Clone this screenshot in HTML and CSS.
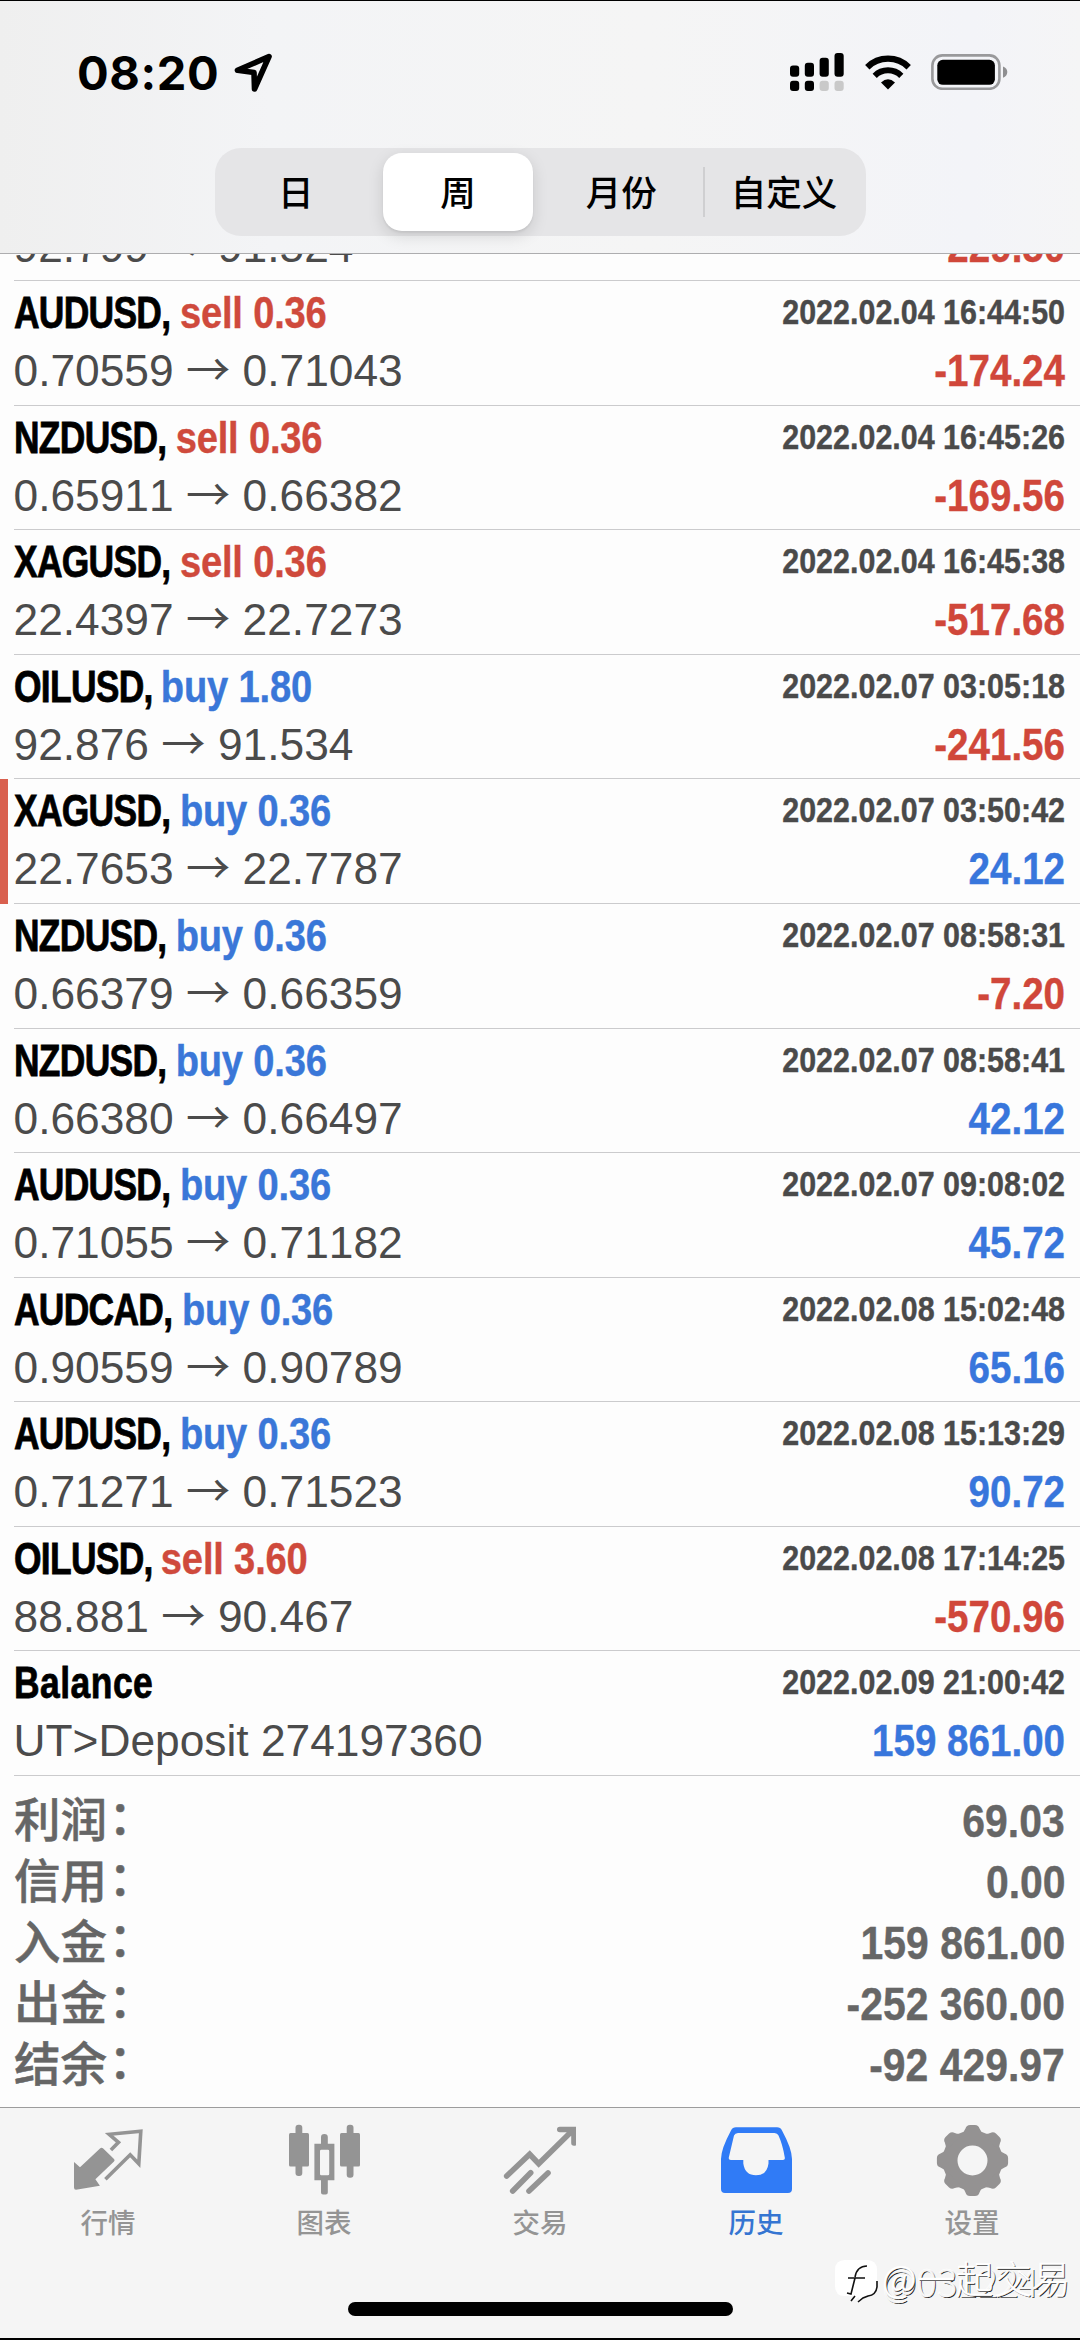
FILE: index.html
```html
<!DOCTYPE html>
<html lang="zh-CN">
<head>
<meta charset="utf-8">
<title>历史</title>
<link rel="stylesheet" href="styles.css">
</head>
<body>
<div class="phone">
  <header class="topbar">
    <div class="status">
      <div class="status-left">
        <span class="clock">08:20</span>
        <svg class="location" viewBox="0 0 40 40"><path d="M36 4.5 4.5 18.3 21 20.5 21.5 37Z" fill="none" stroke="#000" stroke-width="5.6" stroke-linejoin="round"/></svg>
      </div>
      <div class="status-right">
        <svg class="signal" viewBox="0 0 54 38">
          <g fill="#000"><rect x="0" y="12.4" width="9.2" height="11.3" rx="3"/><rect x="14.8" y="9.7" width="9.2" height="14" rx="3"/><rect x="29.6" y="4.7" width="9.2" height="19" rx="3"/><rect x="44.5" y="0" width="9.2" height="23.7" rx="3"/><rect x="0" y="27.7" width="9.2" height="10.3" rx="3"/><rect x="14.8" y="27.7" width="9.2" height="10.3" rx="3"/></g>
          <g fill="#c9c9c9"><rect x="29.6" y="27.7" width="9.2" height="10.3" rx="3"/><rect x="44.5" y="27.7" width="9.2" height="10.3" rx="3"/></g>
        </svg>
        <svg class="wifi" viewBox="0 0 46 35">
          <path d="M2.3 12.2A29.5 29.5 0 0 1 43.7 12.2" fill="none" stroke="#000" stroke-width="6.2"/>
          <path d="M9.7 20.8A19 19 0 0 1 36.3 20.8" fill="none" stroke="#000" stroke-width="6"/>
          <path d="M16 27.5Q23 21 30 27.5L23 34.6Z"/>
        </svg>
        <svg class="battery" viewBox="0 0 78 36">
          <rect x="1.4" y="1.4" width="67" height="33.4" rx="10" fill="none" stroke="#99999b" stroke-width="2.6"/>
          <rect x="6.3" y="5.8" width="57.6" height="25" rx="5.5"/>
          <path d="M72 12.5Q76.3 14 76.3 18T72 23.8Z" fill="#8f8f91"/>
        </svg>
      </div>
    </div>
    <nav class="segments">
      <span class="segment">日</span>
      <span class="segment selected">周</span>
      <span class="segment">月份</span>
      <span class="segment divided">自定义</span>
    </nav>
  </header>

  <main class="history">
    <div class="deal clipped"><div class="price">92.799 <i>→</i> 91.524</div><div class="amount loss">-229.50</div></div>
    <div class="deal"><div class="title"><span class="symbol">AUDUSD, </span><span class="sell">sell 0.36</span></div><div class="time">2022.02.04 16:44:50</div><div class="price">0.70559 <i>→</i> 0.71043</div><div class="amount loss">-174.24</div></div>
    <div class="deal"><div class="title"><span class="symbol">NZDUSD, </span><span class="sell">sell 0.36</span></div><div class="time">2022.02.04 16:45:26</div><div class="price">0.65911 <i>→</i> 0.66382</div><div class="amount loss">-169.56</div></div>
    <div class="deal"><div class="title"><span class="symbol">XAGUSD, </span><span class="sell">sell 0.36</span></div><div class="time">2022.02.04 16:45:38</div><div class="price">22.4397 <i>→</i> 22.7273</div><div class="amount loss">-517.68</div></div>
    <div class="deal"><div class="title"><span class="symbol">OILUSD, </span><span class="buy">buy 1.80</span></div><div class="time">2022.02.07 03:05:18</div><div class="price">92.876 <i>→</i> 91.534</div><div class="amount loss">-241.56</div></div>
    <div class="deal marked"><div class="title"><span class="symbol">XAGUSD, </span><span class="buy">buy 0.36</span></div><div class="time">2022.02.07 03:50:42</div><div class="price">22.7653 <i>→</i> 22.7787</div><div class="amount gain">24.12</div></div>
    <div class="deal"><div class="title"><span class="symbol">NZDUSD, </span><span class="buy">buy 0.36</span></div><div class="time">2022.02.07 08:58:31</div><div class="price">0.66379 <i>→</i> 0.66359</div><div class="amount loss">-7.20</div></div>
    <div class="deal"><div class="title"><span class="symbol">NZDUSD, </span><span class="buy">buy 0.36</span></div><div class="time">2022.02.07 08:58:41</div><div class="price">0.66380 <i>→</i> 0.66497</div><div class="amount gain">42.12</div></div>
    <div class="deal"><div class="title"><span class="symbol">AUDUSD, </span><span class="buy">buy 0.36</span></div><div class="time">2022.02.07 09:08:02</div><div class="price">0.71055 <i>→</i> 0.71182</div><div class="amount gain">45.72</div></div>
    <div class="deal"><div class="title"><span class="symbol">AUDCAD, </span><span class="buy">buy 0.36</span></div><div class="time">2022.02.08 15:02:48</div><div class="price">0.90559 <i>→</i> 0.90789</div><div class="amount gain">65.16</div></div>
    <div class="deal"><div class="title"><span class="symbol">AUDUSD, </span><span class="buy">buy 0.36</span></div><div class="time">2022.02.08 15:13:29</div><div class="price">0.71271 <i>→</i> 0.71523</div><div class="amount gain">90.72</div></div>
    <div class="deal"><div class="title"><span class="symbol">OILUSD, </span><span class="sell">sell 3.60</span></div><div class="time">2022.02.08 17:14:25</div><div class="price">88.881 <i>→</i> 90.467</div><div class="amount loss">-570.96</div></div>
    <div class="deal"><div class="title"><span class="symbol balance">Balance</span></div><div class="time">2022.02.09 21:00:42</div><div class="price">UT&gt;Deposit 274197360</div><div class="amount gain">159 861.00</div></div>

    <section class="summary">
      <div class="total"><span>利润<i lang="zh-TW">：</i></span><span class="sum">69.03</span></div>
      <div class="total"><span>信用<i lang="zh-TW">：</i></span><span class="sum">0.00</span></div>
      <div class="total"><span>入金<i lang="zh-TW">：</i></span><span class="sum">159 861.00</span></div>
      <div class="total"><span>出金<i lang="zh-TW">：</i></span><span class="sum">-252 360.00</span></div>
      <div class="total"><span>结余<i lang="zh-TW">：</i></span><span class="sum">-92 429.97</span></div>
    </section>
  </main>

  <footer class="tabbar">
    <nav class="tabs">
      <div class="tab">
        <svg viewBox="0 0 80 80"><path d="M6 42 12 47.3 32 28.6Q33.6 27 35.2 28.6L46 39Q47.2 40.3 46 41.6L27.4 59.3 31.9 65.7 8 69.7Q6 69.7 6 67.5Z" fill="#949494"/><path d="M42.9 30 50.5 22.3 41.2 14.3 72.8 11.3 70.8 43.7 62.2 34.7 37.4 59.3" fill="none" stroke="#949494" stroke-width="3.6"/></svg>
        <span>行情</span>
      </div>
      <div class="tab">
        <svg viewBox="0 0 80 80" fill="#949494"><rect x="5" y="13" width="20" height="33.4" rx="1.5"/><rect x="11.5" y="4.7" width="6.8" height="51.3" rx="3"/><rect x="56" y="13" width="20" height="33.4" rx="1.5"/><rect x="62.7" y="4.7" width="6.8" height="53" rx="3"/><path fill-rule="evenodd" d="M30.4 23.7h20v36.6h-20zM36 31v23q0 1.3 1.3 1.3h6.6q1.3 0 1.3-1.3V31q0-1.3-1.3-1.3h-6.6Q36 29.7 36 31z"/><path d="M37 24v-7a3.4 3 0 0 1 6.8 0v7zM37 60v12.5q0 2 2 2h2.8q2 0 2-2V60z"/></svg>
        <span>图表</span>
      </div>
      <div class="tab">
        <svg viewBox="0 0 76 80" class="trade"><path d="M6.7 56 29.7 34.3 38.7 43.7 72 11M59.8 9.5H74V23M30.7 52.7 12.7 71M48 53 29 71" fill="none" stroke="#949494" stroke-width="5.6" stroke-linecap="round"/></svg>
        <span>交易</span>
      </div>
      <div class="tab active">
        <svg viewBox="0 0 80 80"><path fill="#307bf6" fill-rule="evenodd" d="M20 7.3H61Q64.5 7.3 66 10.5 76 29 76 39V69Q76 73 72 73H9Q5 73 5 69V39Q5 29 15 10.5 16.5 7.3 20 7.3ZM22 13Q19 13 18 15.5L12.8 37.5Q12.3 40 14.8 40H27.3V43.5Q29 55.3 40 55.3T52.5 43.5V40H67Q69.3 40 68.8 37.5 66.5 24 62.5 15.5 61.5 13 58.5 13Z"/></svg>
        <span>历史</span>
      </div>
      <div class="tab">
        <svg viewBox="0 0 80 80" fill="#949292"><path fill-rule="evenodd" d="M40.5 10.5a30 30 0 1 1 0 60 30 30 0 1 1 0-60zM40.5 25.5a15 15 0 1 0 0 30 15 15 0 1 0 0-30z"/><path id="tooth" d="M28.5 14.5Q32.5 11.5 33.5 8.5 34.5 4.9 38 4.9H43Q46.5 4.9 47.5 8.5 48.5 11.5 52.5 14.5Z"/><use href="#tooth" transform="rotate(45 40.5 40.5)"/><use href="#tooth" transform="rotate(90 40.5 40.5)"/><use href="#tooth" transform="rotate(135 40.5 40.5)"/><use href="#tooth" transform="rotate(180 40.5 40.5)"/><use href="#tooth" transform="rotate(225 40.5 40.5)"/><use href="#tooth" transform="rotate(270 40.5 40.5)"/><use href="#tooth" transform="rotate(315 40.5 40.5)"/></svg>
        <span>设置</span>
      </div>
    </nav>
    <div class="home"></div>
    <div class="watermark">
      <svg viewBox="0 0 46 46"><path d="M12 3H34Q44 3 44 13V29Q44 38 35 39 31 40 26 45V40L20 44V39H12Q2 39 2 29V13Q2 3 12 3Z" fill="#fff"/><path d="M44 24V30Q43 38 35 39L30 41 25 45M22 39 18 44M14 36 18 37 22 21H15M19 21H32M22 20Q24 9 34 9" fill="none" stroke="#111" stroke-width="1.6"/></svg>
      <span class="mark-back">@0312247</span>
      <span class="mark-front">@一起交易</span>
    </div>
  </footer>
</div>
</body>
</html>
```

FILE: styles.css
```css
* { box-sizing: border-box; }
body { margin: 0; background: #fdfdfd; }

.phone {
  width: 1080px;
  height: 2340px;
  display: flex;
  flex-direction: column;
  overflow: hidden;
  background: #fdfdfd;
  border-top: 1px solid #000;
  border-bottom: 2px solid #000;
  font-family: "Liberation Sans", "Noto Sans CJK SC", sans-serif;
  font-kerning: none;
}

/* Status bar and range switch */
.topbar {
  flex: none;
  height: 253px;
  display: flex;
  flex-direction: column;
  align-items: center;
  background: linear-gradient(90deg, #efefef, #f3f4f6 25%, #f5f5f5 60%, #f3f4f8 90%, #f5f5f6);
  border-bottom: 1px solid #adadaf;
}
.status {
  width: 100%;
  height: 147px;
  padding: 51px 71px 0 77px;
  display: flex;
  justify-content: space-between;
  align-items: flex-start;
}
.status-left, .status-right { display: flex; }
.clock {
  width: 156px;
  font: 700 47px/41px Inter, sans-serif;
  letter-spacing: 0.6px;
}
.location { width: 40px; height: 40px; }
.signal { width: 54px; height: 38px; margin: 1px 21px 0 0; }
.wifi { width: 46px; height: 35px; margin: 3px 20px 0 0; }
.battery { width: 78px; height: 36px; margin-top: 2px; }

.segments {
  width: 651px;
  height: 88px;
  display: grid;
  grid-template-columns: repeat(4, 1fr);
  align-items: center;
  border-radius: 26px;
  background: #e5e5e7;
}
.segment {
  position: relative;
  height: 78px;
  text-align: center;
  font: 500 35.5px/75px "Noto Sans CJK SC", sans-serif;
}
.selected {
  margin: 0 7px 0 6px;
  border-radius: 19px;
  background: #fff;
  box-shadow: 0 5px 16px rgba(0, 0, 0, .13), 0 2px 2px rgba(0, 0, 0, .06);
}
.divided::before {
  content: "";
  position: absolute;
  left: 0;
  top: 14px;
  width: 2px;
  height: 50px;
  background: #cfcfd1;
}

/* Deal list, scrolled to its end */
.history {
  flex: 1;
  min-height: 0;
  display: flex;
  flex-direction: column;
  justify-content: flex-end;
  overflow: hidden;
}
.deal {
  flex: none;
  height: 124.58px;
  display: grid;
  grid-template: 58px 58px / 1fr auto;
  padding: 3px 15px 0 13.5px;
  line-height: 58px;
  white-space: nowrap;
  background: linear-gradient(#cbcbcd, #cbcbcd) 14px 100% / 1066px 1px no-repeat;
}
.clipped { height: 66px; padding-top: 0; grid-template-rows: 61px; margin-top: -40px; align-items: end; }
.marked { box-shadow: inset 8px 0 #d9604f; }

/* Condensed bold face */
.title, .time, .amount, .sum {
  font-family: "Liberation Sans", sans-serif;
  font-weight: 700;
  transform: scaleX(.87);
  transform-origin: right;
  -webkit-text-stroke: 0.4px;
}
.title {
  font-size: 44.3px;
  white-space: pre;
  transform: scaleX(.86);
  transform-origin: left;
}
.symbol {
  display: inline-block;
  margin-right: -14px;
  color: #000;
  letter-spacing: -0.9px;
  -webkit-text-stroke: 0.8px #000;
  transform: scaleX(.93);
  transform-origin: left;
}
.balance { letter-spacing: 0.6px; }
.sell, .buy { letter-spacing: -0.2px; }
.sell { color: #cf4a3c; }
.buy { color: #3a77d8; }
.time { margin-top: -1px; font-size: 35px; color: #4a4a4a; }
.price { font-size: 44.3px; color: #4b4b4b; }
.price i { font-family: "Noto Sans CJK SC", sans-serif; font-style: normal; line-height: 40px; }
.amount { font-size: 44.3px; text-align: right; }
.loss { color: #d0473a; }
.gain { color: #3876dc; }

.summary {
  flex: none;
  height: 331px;
  padding: 14px 15px 0 14px;
  color: #666;
}
.total {
  height: 61px;
  display: flex;
  justify-content: space-between;
  font: 500 46.5px/54px "Noto Sans CJK SC", sans-serif;
  -webkit-text-stroke: 0.5px #666;
}
.total i { margin-left: -10px; font-family: "Noto Sans CJK TC", sans-serif; font-style: normal; }
.sum { font-size: 47px; line-height: 61px; }

/* Bottom tabs */
.tabbar {
  position: relative;
  flex: none;
  height: 231px;
  border-top: 1px solid #9c9c9c;
  background: #f5f5f5;
}
.tabs { display: grid; grid-template-columns: repeat(5, 1fr); padding-top: 12px; }
.tab {
  display: flex;
  flex-direction: column;
  align-items: center;
  color: #949494;
  font: 500 27.5px/42px "Noto Sans CJK SC", sans-serif;
}
.tab svg { width: 80px; height: 80px; }
.tab .trade { width: 76px; margin-right: 4px; }
.tab.active { color: #3575d2; }
.home {
  width: 385px;
  height: 14px;
  margin: 60px auto 0;
  border-radius: 7px;
  background: #000;
}
.watermark {
  position: absolute;
  left: 833px;
  top: 149px;
  width: 247px;
  height: 50px;
  color: #fff;
  font: 300 38px/50px "Noto Sans CJK SC", sans-serif;
  white-space: nowrap;
}
.watermark svg { width: 46px; height: 46px; }
.watermark span { position: absolute; left: 49px; top: -5px; text-shadow: 1px 1px 0 #222; -webkit-text-stroke: 0.5px #fff; }
.watermark .mark-front { letter-spacing: 0.5px; }
.watermark .mark-back { top: -1px; color: #f5f5f5; }
```
